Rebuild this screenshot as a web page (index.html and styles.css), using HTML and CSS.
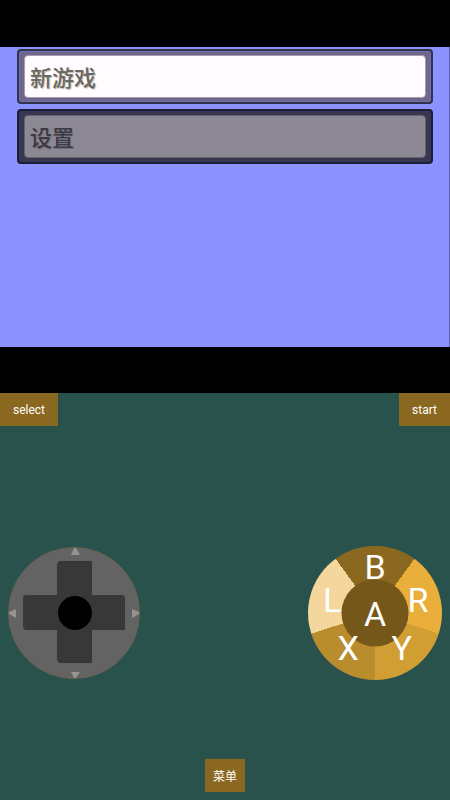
FILE: index.html
```html
<!DOCTYPE html>
<html lang="zh-CN">
<head>
    <meta charset="UTF-8">
    <meta name="viewport" content="width=device-width, initial-scale=1.0">
    <title>新游戏</title>
    <link rel="stylesheet" href="styles.css">
</head>
<body>
    <main class="screen">
        <div class="game">
            <button type="button" class="option active"><span>新游戏</span></button>
            <button type="button" class="option"><span>设置</span></button>
        </div>
    </main>

    <section class="controls">
        <div class="top-keys">
            <button type="button" class="key">select</button>
            <button type="button" class="key">start</button>
        </div>

        <div class="pads">
            <div class="dpad">
                <svg class="dpad-art" viewBox="0 0 132 132" aria-hidden="true">
                    <circle cx="66" cy="66" r="65.5" fill="#636363" stroke="#6d6251" stroke-width="1"/>
                    <path d="M51 14h33v34h31l2 2v33H84v33H51l-2-3V83H17l-2-3V50l2-2h32V17z" fill="#383838"/>
                    <path d="M66 1h2l4 7h-9zM66 131h2l4-6h-9zM1 65v2l7 4v-9zM131 65v2l-7 4v-9z" fill="#969391"/>
                    <circle cx="67" cy="66" r="17" fill="#000"/>
                </svg>
                <button type="button" class="up" aria-label="上"></button>
                <button type="button" class="left" aria-label="左"></button>
                <button type="button" class="right" aria-label="右"></button>
                <button type="button" class="down" aria-label="下"></button>
            </div>

            <div class="wheel">
                <button type="button" class="letter a">A</button>
                <button type="button" class="letter b">B</button>
                <button type="button" class="letter l">L</button>
                <button type="button" class="letter r">R</button>
                <button type="button" class="letter x">X</button>
                <button type="button" class="letter y">Y</button>
            </div>
        </div>

        <button type="button" class="key menu">菜单</button>
    </section>
</body>
</html>
```

FILE: styles.css
```css
* {
    box-sizing: border-box;
}

body {
    display: flex;
    flex-direction: column;
    min-height: 100vh;
    margin: 0;
    background-color: #29524d;
    font-family: Roboto, "Noto Sans CJK SC", sans-serif;
}

button {
    margin: 0;
    padding: 0;
    border: none;
    background: none;
    color: white;
    font-family: inherit;
    cursor: pointer;
}

.screen {
    padding: 47px 0 46px;
    background-color: black;
}

.game {
    display: flex;
    flex-direction: column;
    gap: 5px;
    aspect-ratio: 3 / 2;
    padding: 2px 16px 0 17px;
    border-right: 1px solid #5c60a8;
    background-color: #8c92ff;
}

.option {
    height: 55px;
    padding: 4px 5px;
    border: 2px solid #1c1f34;
    border-radius: 4px;
    background-color: #37364e;
    box-shadow: inset 0 0 0 1px #34365c;
    color: #3c3a46;
    font-size: 22px;
    font-weight: 500;
    text-align: left;
}

.option span {
    display: block;
    height: 43px;
    padding-top: 2px;
    padding-left: 5px;
    border: 1px solid #65626f;
    border-radius: 4px;
    background-color: #8c8994;
    line-height: 42px;
    text-shadow: 1px 1px 1px #74717c;
}

.option.active {
    border-color: #30334a;
    background-color: #70668a;
    box-shadow: inset 0 0 0 1px #6c70b8;
    color: #686864;
}

.option.active span {
    border-color: #a59bab;
    background-color: #fffbff;
    text-shadow: 1px 1px 1px #bdbdb0;
}

.controls {
    display: flex;
    flex: 1;
    flex-direction: column;
    padding-bottom: 8px;
}

.top-keys {
    display: flex;
    justify-content: space-between;
}

.key {
    height: 33px;
    padding: 0 13px;
    background-color: #8b6820;
    font-size: 12px;
}

.menu {
    align-self: center;
    padding: 0 8px;
}

.pads {
    display: flex;
    flex: 1;
    align-items: center;
    justify-content: space-between;
    padding: 41px 8px 0;
}

/* direction pad */
.dpad {
    display: grid;
    grid-template: repeat(3, 1fr) / repeat(3, 1fr);
    position: relative;
    width: 132px;
    height: 132px;
}

.dpad-art {
    position: absolute;
    width: 100%;
    height: 100%;
}

.dpad button {
    z-index: 1;
}

.up {
    grid-area: 1 / 2;
}

.left {
    grid-area: 2 / 1;
}

.right {
    grid-area: 2 / 3;
}

.down {
    grid-area: 3 / 2;
}

/* letter wheel */
.wheel {
    position: relative;
    width: 134px;
    height: 134px;
    border-radius: 50%;
    background: conic-gradient(
        #8b6820 36deg,
        #e9af3a 36deg 108deg,
        #d19e34 108deg 180deg,
        #b98c2e 180deg 252deg,
        #f3d79c 252deg 324deg,
        #8b6820 324deg
    );
}

.letter {
    position: absolute;
    width: 36px;
    height: 36px;
    border-radius: 50%;
    transform: translate(-50%, -50%);
    font-size: 34px;
    line-height: 34px;
}

.a {
    top: 50%;
    left: 50%;
    width: 67px;
    height: 67px;
    background-color: #745719;
}

.b {
    top: 16%;
    left: 50%;
}

.l {
    top: 40%;
    left: 18%;
}

.r {
    top: 40%;
    left: 82%;
}

.x {
    top: 76%;
    left: 30%;
}

.y {
    top: 76%;
    left: 70%;
}
```
